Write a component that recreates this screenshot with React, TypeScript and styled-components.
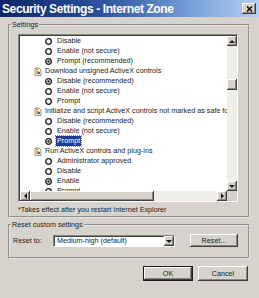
import styled, { createGlobalStyle } from "styled-components";

const GlobalStyle = createGlobalStyle`
  html, body {
    margin: 0;
    padding: 0;
    background: #d6d3cc;
  }
  body {
    font-family: "Liberation Sans", Arial, sans-serif;
    color: #1c1c1c;
  }
`;

const raised = `
  background: #d6d3cc;
  box-shadow: inset -1px -1px 0 #404040, inset 1px 1px 0 #ffffff, inset -2px -2px 0 #8a8780;
`;

const Window = styled.div`
  width: 259px;
  height: 298px;
  background: #d6d3cc;
  display: flex;
  flex-direction: column;
  overflow: hidden;
`;

const TitleBar = styled.div`
  height: 17px;
  flex: 0 0 17px;
  display: flex;
  align-items: center;
  justify-content: space-between;
  padding: 0 3px 0 2px;
  background: linear-gradient(to right, #0c2468 0%, #2c54a0 40%, #7aa2dc 75%, #b4d0f2 100%);
`;

const Title = styled.div`
  color: #ffffff;
  font-weight: bold;
  font-size: 12px;
  letter-spacing: -0.4px;
  white-space: nowrap;
`;

const CloseButton = styled.div`
  ${raised}
  width: 14px;
  height: 11px;
  display: flex;
  align-items: center;
  justify-content: center;
`;

const Body = styled.div`
  display: flex;
  flex-direction: column;
  padding: 3px 9px 0 8px;
  font-size: 7.2px;
  line-height: 10px;
`;

const GroupBox = styled.fieldset<{ $gap?: number }>`
  margin: ${({ $gap }) => $gap ?? 0}px 0 0;
  padding: 0;
  min-width: 0;
  border: 2px groove #e4e2dc;
`;

const Legend = styled.legend`
  margin-left: 1px;
  padding: 0 1px;
  font-size: 7.2px;
  line-height: 10px;
`;

const SettingsInner = styled.div`
  padding: 4px 10px 1px 8px;
  display: flex;
  flex-direction: column;
`;

const ListBox = styled.div`
  width: 220px;
  height: 168px;
  box-sizing: border-box;
  border-top: 1px solid #8a8780;
  border-left: 1px solid #8a8780;
  border-right: 1px solid #ffffff;
  border-bottom: 1px solid #ffffff;
  box-shadow: inset 1px 1px 0 #404040;
  padding: 1px 0 0 1px;
  display: grid;
  grid-template-columns: 1fr 10px;
  grid-template-rows: 1fr 10px;
`;

const Items = styled.div`
  background: #ffffff;
  overflow: hidden;
  min-width: 0;
`;

const Row = styled.div<{ $indent: number }>`
  height: 10px;
  display: flex;
  align-items: center;
  padding-left: ${({ $indent }) => $indent}px;
  white-space: nowrap;
  gap: ${({ $indent }) => ($indent > 20 ? 5 : 3)}px;

  & > * {
    flex-shrink: 0;
  }
`;

const Label = styled.span<{ $selected?: boolean }>`
  padding: 0 1px;
  margin-left: -1px;
  ${({ $selected }) =>
    $selected &&
    `
    background: #1e3c8c;
    color: #ffffff;
    outline: 1px dotted #888;
  `}
`;

const VScroll = styled.div`
  display: flex;
  flex-direction: column;
  background: #eeede8;
`;

const HScroll = styled.div`
  display: flex;
  background: #eeede8;
`;

const ScrollButton = styled.div`
  ${raised}
  width: 10px;
  height: 10px;
  flex: 0 0 auto;
  display: flex;
  align-items: center;
  justify-content: center;
`;

const VThumb = styled.div`
  ${raised}
  width: 10px;
  height: 11px;
  margin-top: 33px;
`;

const HThumb = styled.div`
  ${raised}
  width: 124px;
  height: 10px;
`;

const Spacer = styled.div`
  flex: 1;
`;

const Corner = styled.div`
  background: #d6d3cc;
`;

const Note = styled.div`
  margin-top: 3px;
  white-space: nowrap;
`;

const ResetRow = styled.div`
  display: flex;
  align-items: center;
  padding: 4px 10px 10px 3px;
`;

const ResetLabel = styled.span`
  width: 40px;
`;

const Combo = styled.div`
  width: 122px;
  height: 12px;
  box-sizing: border-box;
  background: #ffffff;
  border-top: 1px solid #8a8780;
  border-left: 1px solid #8a8780;
  border-right: 1px solid #ffffff;
  border-bottom: 1px solid #ffffff;
  box-shadow: inset 1px 1px 0 #404040;
  display: flex;
  align-items: center;
  padding: 1px 0 0 3px;
`;

const ComboText = styled.span`
  flex: 1;
  white-space: nowrap;
`;

const ComboButton = styled(ScrollButton)`
  height: 10px;
`;

const Button = styled.div<{ $default?: boolean; $w: number; $h: number }>`
  ${raised}
  width: ${({ $w }) => $w}px;
  height: ${({ $h }) => $h}px;
  box-sizing: border-box;
  display: flex;
  align-items: center;
  justify-content: center;
  ${({ $default }) => $default && `border: 1px solid #1c1c1c;`}
`;

const ButtonRow = styled.div`
  display: flex;
  justify-content: flex-end;
  gap: 5px;
  margin-top: 7px;
  padding-right: 2px;
`;

const ResetButton = styled(Button)`
  margin-left: auto;
`;

function Radio({ checked }: { checked?: boolean }) {
  return (
    <svg width="7" height="7" viewBox="0 0 7 7">
      <circle cx="3.5" cy="3.5" r="2.8" fill="#fff" stroke="#1c1c1c" strokeWidth="1.3" />
      {checked && <circle cx="3.5" cy="3.5" r="1.2" fill="#1c1c1c" />}
    </svg>
  );
}

function ActiveXIcon() {
  return (
    <svg width="8" height="9" viewBox="0 0 8 9">
      <path d="M1 1h4l2 2v5.5H1z" fill="#fdf8e6" stroke="#8c7a52" strokeWidth="0.8" />
      <rect x="2" y="4" width="3" height="3" fill="#d8a830" />
      <circle cx="5" cy="6" r="1.2" fill="#3a5cb0" />
      <rect x="2" y="2.2" width="2" height="1" fill="#c84030" />
    </svg>
  );
}

function Arrow({ dir }: { dir: "up" | "down" | "left" | "right" }) {
  const pts = {
    up: "1,4 4,1 7,4",
    down: "1,1 4,4 7,1",
    left: "4,1 1,4 4,7",
    right: "1,1 4,4 1,7",
  }[dir];
  const vertical = dir === "up" || dir === "down";
  return (
    <svg width={vertical ? 8 : 5} height={vertical ? 5 : 8} viewBox={vertical ? "0 0 8 5" : "0 0 5 8"}>
      <polygon points={pts} fill="#1c1c1c" />
    </svg>
  );
}

type Item =
  | { kind: "head"; text: string }
  | { kind: "opt"; text: string; checked?: boolean; selected?: boolean };

const items: Item[] = [
  { kind: "opt", text: "Disable" },
  { kind: "opt", text: "Enable (not secure)" },
  { kind: "opt", text: "Prompt (recommended)", checked: true },
  { kind: "head", text: "Download unsigned ActiveX controls" },
  { kind: "opt", text: "Disable (recommended)", checked: true },
  { kind: "opt", text: "Enable (not secure)" },
  { kind: "opt", text: "Prompt" },
  { kind: "head", text: "Initialize and script ActiveX controls not marked as safe for s" },
  { kind: "opt", text: "Disable (recommended)" },
  { kind: "opt", text: "Enable (not secure)" },
  { kind: "opt", text: "Prompt", checked: true, selected: true },
  { kind: "head", text: "Run ActiveX controls and plug-ins" },
  { kind: "opt", text: "Administrator approved" },
  { kind: "opt", text: "Disable" },
  { kind: "opt", text: "Enable", checked: true },
  { kind: "opt", text: "Prompt" },
];

export default function App() {
  return (
    <>
      <GlobalStyle />
      <Window>
        <TitleBar>
          <Title>Security Settings - Internet Zone</Title>
          <CloseButton>
            <svg width="7" height="6" viewBox="0 0 7 6">
              <path d="M1 0.5L6 5.5M6 0.5L1 5.5" stroke="#111" strokeWidth="1.6" />
            </svg>
          </CloseButton>
        </TitleBar>
        <Body>
          <GroupBox>
            <Legend>Settings</Legend>
            <SettingsInner>
              <ListBox>
                <Items>
                  {items.map((item, i) =>
                    item.kind === "head" ? (
                      <Row key={i} $indent={14}>
                        <ActiveXIcon />
                        <span>{item.text}</span>
                      </Row>
                    ) : (
                      <Row key={i} $indent={25}>
                        <Radio checked={item.checked} />
                        <Label $selected={item.selected}>{item.text}</Label>
                      </Row>
                    )
                  )}
                </Items>
                <VScroll>
                  <ScrollButton>
                    <Arrow dir="up" />
                  </ScrollButton>
                  <VThumb />
                  <Spacer />
                  <ScrollButton>
                    <Arrow dir="down" />
                  </ScrollButton>
                </VScroll>
                <HScroll>
                  <ScrollButton>
                    <Arrow dir="left" />
                  </ScrollButton>
                  <HThumb />
                  <Spacer />
                  <ScrollButton>
                    <Arrow dir="right" />
                  </ScrollButton>
                </HScroll>
                <Corner />
              </ListBox>
              <Note>*Takes effect after you restart Internet Explorer</Note>
            </SettingsInner>
          </GroupBox>
          <GroupBox $gap={2}>
            <Legend>Reset custom settings</Legend>
            <ResetRow>
              <ResetLabel>Reset to:</ResetLabel>
              <Combo>
                <ComboText>Medium-high (default)</ComboText>
                <ComboButton>
                  <Arrow dir="down" />
                </ComboButton>
              </Combo>
              <ResetButton $w={48} $h={13}>
                Reset...
              </ResetButton>
            </ResetRow>
          </GroupBox>
          <ButtonRow>
            <Button $default $w={50} $h={15}>
              OK
            </Button>
            <Button $w={50} $h={15}>
              Cancel
            </Button>
          </ButtonRow>
        </Body>
      </Window>
    </>
  );
}
